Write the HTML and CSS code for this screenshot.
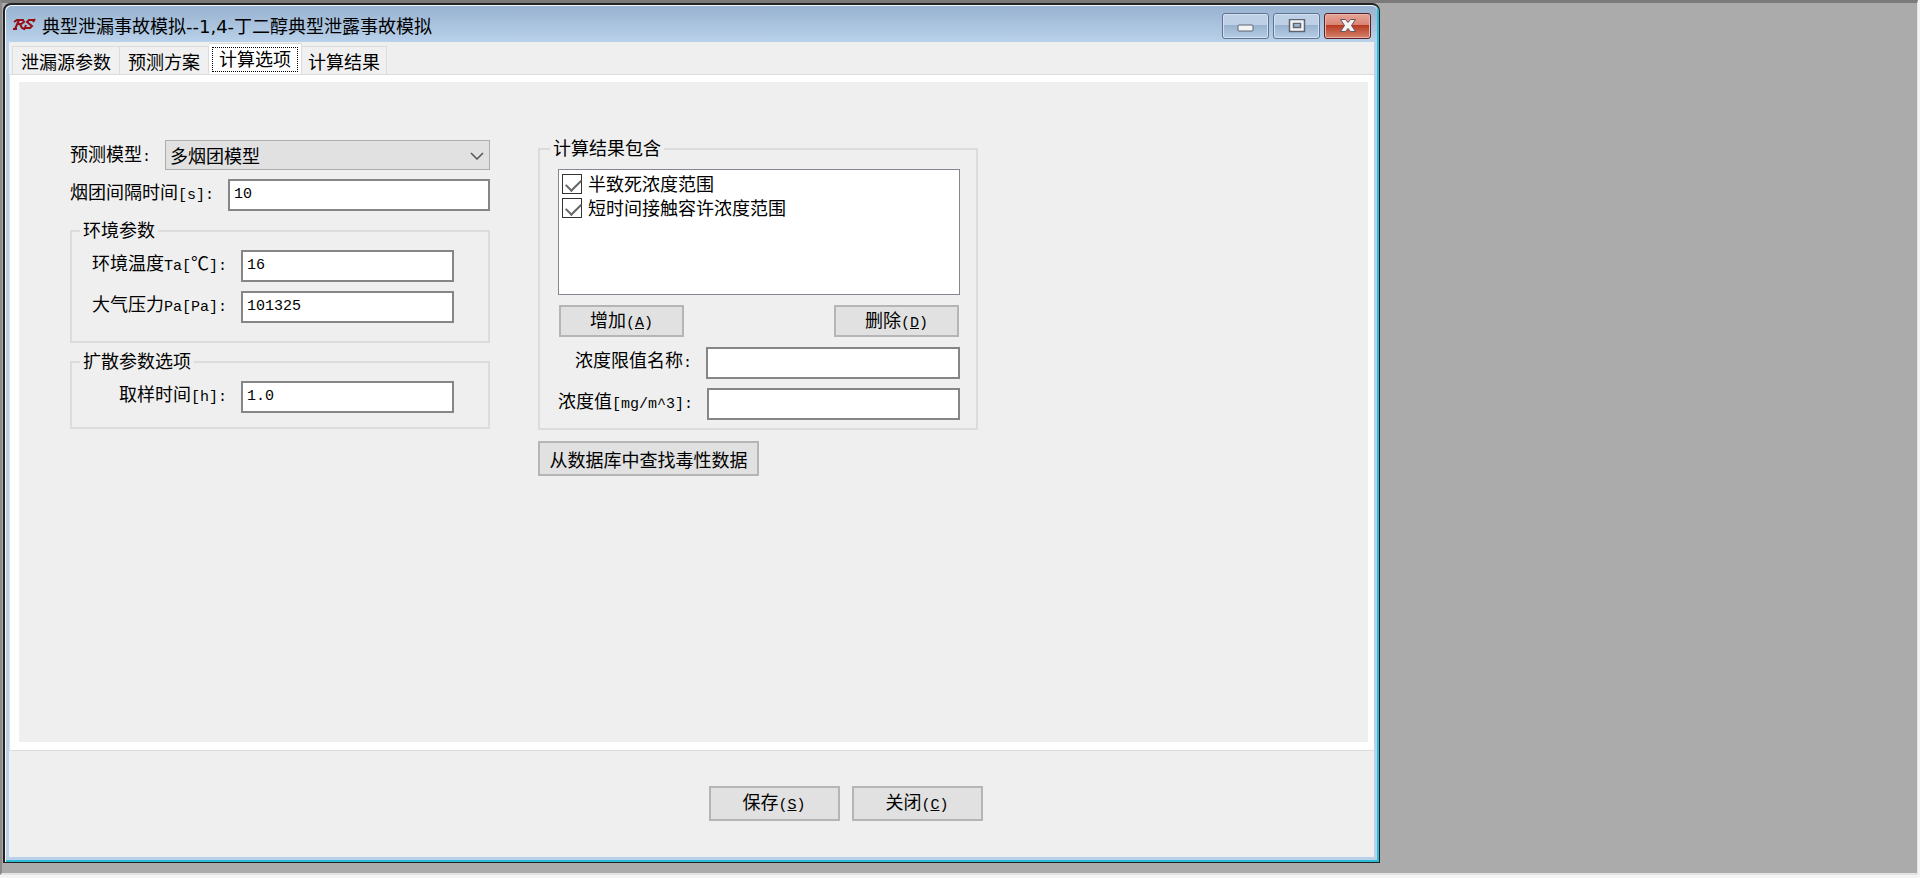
FILE: index.html
```html
<!DOCTYPE html>
<html lang="zh">
<head>
    <meta charset="UTF-8">
    <meta name="viewport" content="width=device-width, initial-scale=1.0">
    <title>典型泄漏事故模拟</title>
    <link rel="stylesheet" href="styles.css">
</head>
<body>
    <div class="desktop">
        <div class="window">
            <div class="title-bar">
                <svg class="logo" width="24" height="14" viewBox="0 0 24 14" fill="none" stroke="#960f14" stroke-width="2">
                    <path d="M2 4L5 2H11L12 4L9 6H5M7 2L3 11M1 11H5M8 6L10 10L13 11"/>
                    <path d="M23 1L21 4M22 2H17L15 4L20 8L18 10H13M14 7L12 12"/>
                </svg>
                <h1 class="title">典型泄漏事故模拟--1,4-丁二醇典型泄露事故模拟</h1>
                <div class="window-buttons">
                    <button class="win-btn" aria-label="最小化">
                        <svg width="18" height="14" viewBox="0 0 18 14"><rect x="1" y="6" width="15" height="6" rx="1" fill="#f4f4f4" stroke="#5d6473"/></svg>
                    </button>
                    <button class="win-btn" aria-label="最大化">
                        <svg width="18" height="14" viewBox="0 0 18 14"><path d="M1.500 .5h15v12h-15zM5.500 4.500v4h7v-4z" fill="#f4f4f4" fill-rule="evenodd" stroke="#5d6473" stroke-width="1.500"/></svg>
                    </button>
                    <button class="win-btn win-close" aria-label="关闭窗口">
                        <svg width="18" height="14" viewBox="0 0 18 14"><path d="M1.500 .5h5L9 3.500 11.500 .5h5L12.500 6.500l4 6h-5L9 9.500 6.500 12.500h-5l4-6z" fill="#f4f4f4" stroke="#66535c"/></svg>
                    </button>
                </div>
            </div>

            <div class="client">
                <div class="tabs" role="tablist">
                    <button class="tab" role="tab">泄漏源参数</button>
                    <button class="tab" role="tab">预测方案</button>
                    <button class="tab active" role="tab" aria-selected="true"><span>计算选项</span></button>
                    <button class="tab" role="tab">计算结果</button>
                </div>

                <div class="tab-page">
                    <div class="page-inner">
                        <div class="left-column">
                            <div class="row model-row">
                                <label for="model">预测模型<span class="mono">:</span></label>
                                <div class="select-box">
                                    <select id="model">
                                        <option>多烟团模型</option>
                                    </select>
                                    <svg class="arrow" width="14" height="8" viewBox="0 0 14 8" fill="none" stroke="#555" stroke-width="1.500"><path d="M1 1l6 6 6-6"/></svg>
                                </div>
                            </div>
                            <div class="row interval-row">
                                <label for="interval">烟团间隔时间<span class="mono">[s]:</span></label>
                                <input type="text" id="interval" value="10">
                            </div>
                            <fieldset class="group env-group">
                                <legend>环境参数</legend>
                                <div class="row">
                                    <label for="temp">环境温度<span class="mono">Ta[</span>℃<span class="mono">]:</span></label>
                                    <input type="text" id="temp" value="16">
                                </div>
                                <div class="row">
                                    <label for="pressure">大气压力<span class="mono">Pa[Pa]:</span></label>
                                    <input type="text" id="pressure" value="101325">
                                </div>
                            </fieldset>
                            <fieldset class="group diffuse-group">
                                <legend>扩散参数选项</legend>
                                <div class="row">
                                    <label for="sample">取样时间<span class="mono">[h]:</span></label>
                                    <input type="text" id="sample" value="1.0">
                                </div>
                            </fieldset>
                        </div>

                        <div class="right-column">
                            <fieldset class="group result-group">
                                <legend>计算结果包含</legend>
                                <div class="check-list">
                                    <label class="check-item"><input type="checkbox" checked>半致死浓度范围</label>
                                    <label class="check-item"><input type="checkbox" checked>短时间接触容许浓度范围</label>
                                </div>
                                <div class="list-buttons">
                                    <button class="btn">增加<span class="mono">(<u>A</u>)</span></button>
                                    <button class="btn">删除<span class="mono">(<u>D</u>)</span></button>
                                </div>
                                <div class="row">
                                    <label for="limitName">浓度限值名称<span class="mono">:</span></label>
                                    <input type="text" id="limitName">
                                </div>
                                <div class="row">
                                    <label for="limitValue">浓度值<span class="mono">[mg/m^3]:</span></label>
                                    <input type="text" id="limitValue">
                                </div>
                            </fieldset>
                            <button class="btn btn-db">从数据库中查找毒性数据</button>
                        </div>
                    </div>
                </div>

                <div class="footer">
                    <button class="btn btn-big">保存<span class="mono">(<u>S</u>)</span></button>
                    <button class="btn btn-big">关闭<span class="mono">(<u>C</u>)</span></button>
                </div>
            </div>
        </div>
    </div>
</body>
</html>
```
FILE: styles.css
```css
:root {
    --face: #efefef;
    --line: #dcdcdc;
    --btn: #e1e1e1;
    --frame: #b9d1ea;
}

* {
    box-sizing: border-box;
}

body {
    margin: 0;
    font-family: "Noto Sans CJK SC", sans-serif;
    font-size: 18px;
    line-height: 24px;
    color: #000;
    background: #f4f4f4;
}

button,
input,
select {
    font: inherit;
    color: inherit;
    border-radius: 0;
}

.mono {
    font-family: "Liberation Mono", monospace;
    font-size: 15px;
}

.desktop {
    display: flex;
    min-height: calc(100vh - 3px);
    margin-right: 2px;
    padding: 0 0 10px 1px;
    background: #ababab;
    border-top: 3px solid #7a7a7a;
    border-left: 2px solid #8a8a8a;
    border-right: 1px solid #e3e3e3;
    border-bottom: 2px solid #e3e3e3;
}

.window {
    display: flex;
    flex-direction: column;
    width: 72%;
    max-width: calc(100% - 537px);
    padding: 0 5px 5px 4px;
    background: var(--frame);
    border: 1px solid #222;
    border-left-width: 2px;
    border-top-width: 2px;
    border-radius: 8px 8px 0 0;
    box-shadow: inset 1px 1px 0 #f4f8fc, inset -2px -2px 0 #2bbcd6;
}

.title-bar {
    display: flex;
    align-items: flex-start;
    height: 36px;
    margin: 1px -3px 0;
    padding: 7px 6px 0;
    background: linear-gradient(#98b3d0, #b9d1ea);
    border-radius: 6px 6px 0 0;
}

.logo {
    margin-top: 5px;
}

.title {
    flex: 1;
    margin: 2px 0 0 6px;
    font-family: "DejaVu Sans", "Noto Sans CJK SC", sans-serif;
    font-size: 18px;
    font-weight: normal;
    line-height: 24px;
}

.window-buttons {
    display: flex;
    gap: 4px;
}

.win-btn {
    display: flex;
    align-items: center;
    justify-content: center;
    width: 47px;
    height: 26px;
    padding: 0;
    border: 1px solid #61738c;
    border-radius: 3px;
    background: linear-gradient(#bdd0e6 45%, #98b2ce 45%, #b5cde6);
    box-shadow: inset 0 0 0 1px #d3e2f2;
}

.win-close {
    border-color: #5b1f28;
    background: linear-gradient(#e6a597, #d98574 45%, #b8371f 45%, #d4836c);
    box-shadow: inset 0 0 0 1px #e9b5a8;
}

.client {
    display: flex;
    flex: 1;
    flex-direction: column;
    background: var(--face);
}

.tabs {
    display: flex;
    align-items: flex-end;
    height: 32px;
    padding-left: 3px;
}

.tab {
    height: 28px;
    padding: 0 8px;
    background: #f0f0f0;
    border: 1px solid var(--line);
    border-bottom: 0;
    line-height: 26px;
}

.tab + .tab {
    border-left: 0;
}

.tab:last-child {
    padding: 0 6px;
}

.tab.active {
    height: 31px;
    padding: 3px;
    background: #fff;
    line-height: 20px;
}

.tab.active span {
    display: block;
    height: 25px;
    padding: 0 6px;
    border: 1px dotted #000;
}

.tab-page {
    display: flex;
    flex: 1;
    padding: 7px 6px 8px 9px;
    background: #fff;
    border: 1px solid var(--line);
    border-right: 0;
}

.page-inner {
    display: flex;
    flex: 1;
    align-items: flex-start;
    gap: 48px;
    padding: 58px 51px;
    background: var(--face);
}

.left-column {
    width: 420px;
}

.right-column {
    width: 440px;
}

.row {
    display: flex;
    align-items: flex-start;
    justify-content: flex-end;
    margin-bottom: 9px;
}

.row label {
    margin-right: 14px;
    white-space: nowrap;
}

.row input {
    width: 213px;
    height: 32px;
    padding: 0 4px 2px;
    background: #fff;
    border: 2px solid #868686;
    font-family: "Liberation Mono", monospace;
    font-size: 15px;
}

.model-row {
    align-items: center;
}

.select-box {
    position: relative;
    flex: 1;
}

.select-box select {
    display: block;
    width: 100%;
    height: 30px;
    padding: 0 4px;
    appearance: none;
    background: var(--btn);
    border: 1px solid #adadad;
}

.arrow {
    position: absolute;
    top: 12px;
    right: 6px;
}

.row.interval-row input {
    flex: 1;
}

.group {
    min-width: 0;
    margin: 0;
    padding: 5px 34px 0 16px;
    border: 2px solid var(--line);
}

.group legend {
    margin-left: -8px;
    padding: 0 3px 4px;
}

.env-group {
    height: 126px;
    margin-top: -3px;
}

.diffuse-group {
    height: 81px;
    margin-top: 5px;
}

.result-group {
    height: 295px;
    margin-top: -5px;
    padding: 6px 16px 0 18px;
}

.check-list {
    height: 126px;
    padding: 1px 3px;
    background: #fff;
    border: 1px solid #828790;
}

.check-item {
    display: flex;
    align-items: center;
    gap: 6px;
    height: 24px;
}

.check-item input {
    width: 20px;
    height: 20px;
    margin: 2px 0 0;
    appearance: none;
    border: 1px solid #333;
    background: #fff;
}

.check-item input:checked::before {
    content: "";
    display: block;
    width: 13px;
    height: 7px;
    margin: 4px 0 0 3px;
    border-left: 2px solid #666;
    border-bottom: 2px solid #666;
    transform: rotate(-45deg);
}

.list-buttons {
    display: flex;
    justify-content: space-between;
    margin: 10px 1px;
}

.btn {
    width: 125px;
    height: 32px;
    padding: 0;
    background: var(--btn);
    border: 2px solid #b5b5b5;
    line-height: 24px;
}

.result-group .row input {
    width: 254px;
}

.btn-db {
    width: 221px;
    height: 35px;
    margin-top: 11px;
}

.footer {
    display: flex;
    justify-content: center;
    gap: 12px;
    padding: 35px 0 36px 308px;
}

.btn-big {
    width: 131px;
    height: 35px;
}
```
